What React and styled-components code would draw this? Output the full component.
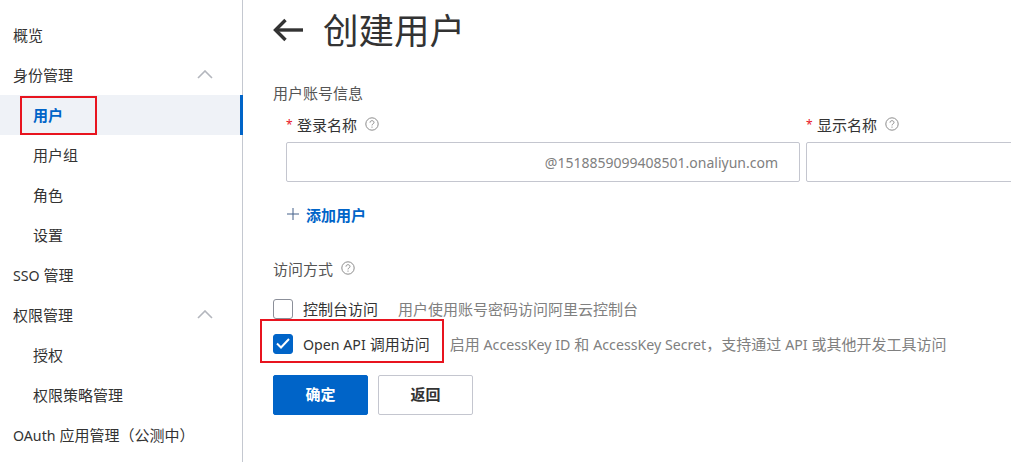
import React from 'react';
import styled, { createGlobalStyle } from 'styled-components';

const GlobalStyle = createGlobalStyle`
  html, body {
    margin: 0;
    padding: 0;
    background: #fff;
    overflow: hidden;
  }
  body {
    font-family: "Noto Sans", "Noto Sans CJK SC", sans-serif;
    font-size: 15px;
    color: #333;
  }
`;

const Page = styled.div`
  display: flex;
  width: 1011px;
  height: 462px;
  overflow: hidden;
`;

const Sidebar = styled.nav`
  flex: none;
  width: 242px;
  height: 447px;
  padding-top: 15px;
  border-right: 1px solid #c4c8d0;
`;

const NavItem = styled.div`
  position: relative;
  display: flex;
  align-items: center;
  justify-content: space-between;
  height: 40px;
  box-sizing: border-box;
  padding: 0 29px 2px ${props => (props.$child ? '33px' : '13px')};
  white-space: nowrap;
  color: ${props => (props.$active ? '#0064c8' : '#333')};
  font-weight: ${props => (props.$active ? 700 : 400)};
  background: ${props => (props.$active ? '#eff2f7' : 'transparent')};
  border-right: ${props => (props.$active ? '3px solid #0064c8' : '0')};
  margin-right: ${props => (props.$active ? '-1px' : '0')};
`;

const NavMark = styled.span`
  position: absolute;
  left: 20px;
  top: 1px;
  width: 77px;
  height: 39px;
  box-sizing: border-box;
  border: 2px solid #e8141f;
`;

const Latin = styled.span`
  font-size: 14.2px;
`;

const Main = styled.main`
  flex: 1;
  min-width: 0;
  padding-left: 30px;
`;

const TitleRow = styled.header`
  display: flex;
  align-items: center;
  height: 60px;
  gap: 19px;
`;

const Title = styled.h1`
  margin: 0;
  font-size: 35.5px;
  font-weight: 400;
  line-height: 60px;
  color: #333;
`;

const SectionLabel = styled.div`
  display: flex;
  align-items: center;
  gap: 8px;
  height: 20px;
  box-sizing: border-box;
  padding-bottom: 2px;
  color: #555;
`;

const AccountSection = styled.section`
  margin-top: 23px;
`;

const Fields = styled.div`
  display: flex;
  gap: 6px;
  margin-top: 11px;
  margin-left: 13px;
`;

const Field = styled.div`
  flex: none;
  width: ${props => props.$width}px;
`;

const FieldLabel = styled.label`
  display: flex;
  align-items: center;
  height: 20px;
  color: #333;
  gap: 8px;
`;

const Star = styled.span`
  width: 6px;
  margin-right: -3px;
  color: #e8141f;
  font-size: 12px;
`;

const InputBox = styled.div`
  display: flex;
  align-items: center;
  justify-content: flex-end;
  height: 40px;
  margin-top: 8px;
  padding-right: 21px;
  box-sizing: border-box;
  border: 1px solid #c4c6cf;
  border-radius: 2px;
  color: #808080;
  font-size: 14px;
`;

const AddUser = styled.div`
  display: flex;
  align-items: center;
  gap: 7px;
  height: 20px;
  box-sizing: border-box;
  padding-bottom: 2px;
  margin-top: 23px;
  margin-left: 14px;
  color: #0064c8;
  font-weight: 700;
`;

const AccessSection = styled.section`
  margin-top: 34px;
`;

const OptionList = styled.div`
  display: flex;
  flex-direction: column;
  margin-top: 12px;
`;

const Option = styled.div`
  position: relative;
  display: flex;
  align-items: center;
  height: 35px;
`;

const OptionMark = styled.span`
  position: absolute;
  left: -13px;
  top: -7px;
  width: 184px;
  height: 44px;
  box-sizing: border-box;
  border: 2px solid #e8141f;
  pointer-events: none;
`;

const CheckBox = styled.span`
  flex: none;
  display: flex;
  align-items: center;
  justify-content: center;
  width: 20px;
  height: 20px;
  box-sizing: border-box;
  border-radius: 3px;
  border: 1px solid ${props => (props.$checked ? '#0064c8' : '#8b8f99')};
  background: ${props => (props.$checked ? '#0064c8' : '#fff')};
`;

const OptionText = styled.span`
  margin-left: 10px;
  color: #333;
  white-space: nowrap;
`;

const OptionHint = styled.span`
  margin-left: 20px;
  color: #808080;
  white-space: nowrap;
`;

const Actions = styled.div`
  display: flex;
  gap: 10px;
  margin-top: 14px;
`;

const Button = styled.button`
  width: 95px;
  height: 40px;
  padding: 0 0 3px;
  box-sizing: border-box;
  border-radius: 2px;
  font-family: inherit;
  font-size: 15px;
  font-weight: 700;
  color: ${props => (props.$primary ? '#fff' : '#333')};
  background: ${props => (props.$primary ? '#0064c8' : '#fff')};
  border: 1px solid ${props => (props.$primary ? '#0064c8' : '#c4c6cf')};
`;

const HelpIcon = () => (
  <svg width="14" height="14" viewBox="0 0 14 14" fill="none" stroke="#8c8c8c" strokeWidth="1">
    <circle cx="7" cy="7" r="6.2" />
    <path d="M5 5.6c0-1.2.9-1.9 2-1.9s2 .7 2 1.7c0 1.5-2 1.5-2 3" />
    <path d="M7 9.6v1.1" />
  </svg>
);

const Chevron = () => (
  <svg width="16" height="9" viewBox="0 0 16 9" fill="none" stroke="#b3b6bd" strokeWidth="1.6">
    <path d="M1 8l7-7 7 7" />
  </svg>
);

const BackArrow = () => (
  <svg width="31" height="24" viewBox="0 0 31 24" fill="none" stroke="#333" strokeWidth="3.4">
    <path d="M30 12H3" />
    <path d="M12.5 2L2.5 12l10 10" />
  </svg>
);

const Plus = () => (
  <svg width="12" height="12" viewBox="0 0 12 12" stroke="#44618a" strokeWidth="1">
    <path d="M6 0v12M0 6h12" />
  </svg>
);

const Tick = () => (
  <svg width="14" height="11" viewBox="0 0 14 11" fill="none" stroke="#fff" strokeWidth="2">
    <path d="M1 5.5l4 4 8-8.5" />
  </svg>
);

const navItems = [
  { label: '概览' },
  { label: '身份管理', open: true },
  { label: '用户', child: true, active: true },
  { label: '用户组', child: true },
  { label: '角色', child: true },
  { label: '设置', child: true },
  { label: <><Latin>SSO</Latin> 管理</>, key: 'sso' },
  { label: '权限管理', open: true },
  { label: '授权', child: true },
  { label: '权限策略管理', child: true },
  { label: <><Latin>OAuth</Latin> 应用管理（公测中）</>, key: 'oauth' },
];

export default function App() {
  return (
    <Page>
      <GlobalStyle />
      <Sidebar>
        {navItems.map(item => (
          <NavItem key={item.key || item.label} $child={item.child} $active={item.active}>
            <span>{item.label}</span>
            {item.open && <Chevron />}
            {item.active && <NavMark />}
          </NavItem>
        ))}
      </Sidebar>
      <Main>
        <TitleRow>
          <BackArrow />
          <Title>创建用户</Title>
        </TitleRow>
        <AccountSection>
          <SectionLabel>用户账号信息</SectionLabel>
          <Fields>
            <Field $width={514}>
              <FieldLabel>
                <Star>*</Star>登录名称<HelpIcon />
              </FieldLabel>
              <InputBox>@1518859099408501.onaliyun.com</InputBox>
            </Field>
            <Field $width={300}>
              <FieldLabel>
                <Star>*</Star>显示名称<HelpIcon />
              </FieldLabel>
              <InputBox />
            </Field>
          </Fields>
          <AddUser>
            <Plus />添加用户
          </AddUser>
        </AccountSection>
        <AccessSection>
          <SectionLabel>
            访问方式<HelpIcon />
          </SectionLabel>
          <OptionList>
            <Option>
              <CheckBox />
              <OptionText>控制台访问</OptionText>
              <OptionHint>用户使用账号密码访问阿里云控制台</OptionHint>
            </Option>
            <Option>
              <OptionMark />
              <CheckBox $checked><Tick /></CheckBox>
              <OptionText><Latin>Open API</Latin> 调用访问</OptionText>
              <OptionHint>
                启用 <Latin>AccessKey ID</Latin> 和 <Latin>AccessKey Secret</Latin>，支持通过 <Latin>API</Latin> 或其他开发工具访问
              </OptionHint>
            </Option>
          </OptionList>
          <Actions>
            <Button $primary>确定</Button>
            <Button>返回</Button>
          </Actions>
        </AccessSection>
      </Main>
    </Page>
  );
}
